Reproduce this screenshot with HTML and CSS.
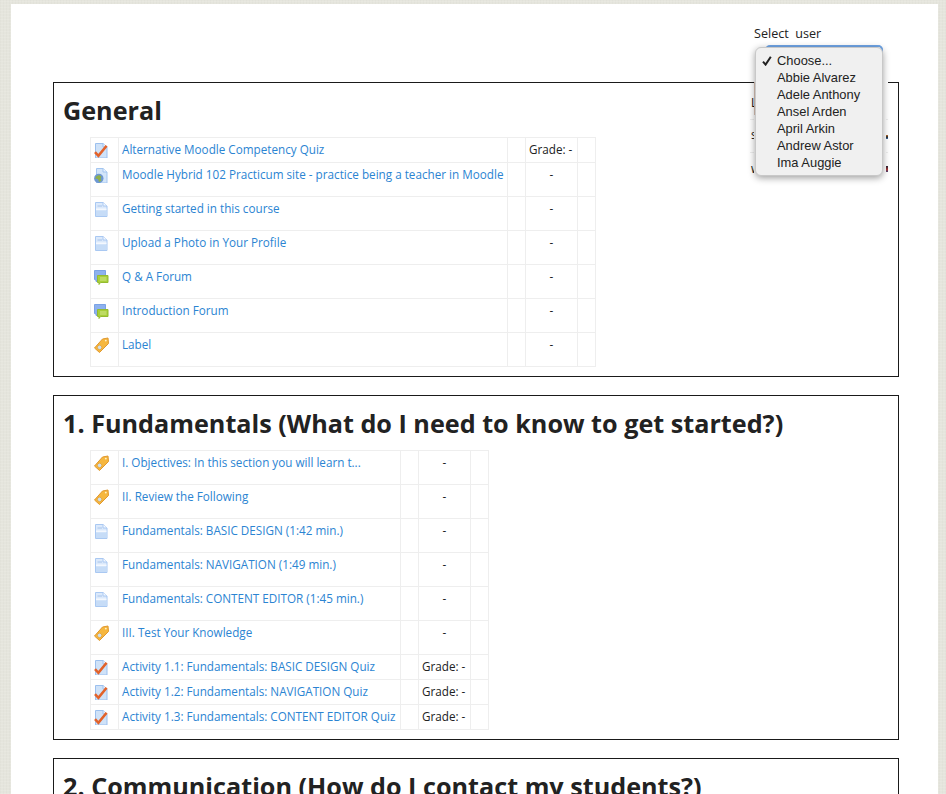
FILE: index.html
```html
<!DOCTYPE html>
<html lang="en">
<head>
<meta charset="utf-8">
<title>Course grades</title>
<link rel="stylesheet" href="styles.css">
</head>
<body>
<svg class="defs" width="0" height="0" aria-hidden="true">
  <symbol id="i-quiz" viewBox="0 0 16 16">
    <path d="M1.5 1.5H9L13 5V16H1.5Z" fill="#cfe2f8" stroke="#9cc0ee"/>
    <path d="M9 1.5V5H13" fill="#eaf3fd" stroke="#9cc0ee"/>
    <path d="M1 10.2 4.4 13.8 12.6 3.8" fill="none" stroke="#e2622a" stroke-width="2.6"/>
  </symbol>
  <symbol id="i-url" viewBox="0 0 16 16">
    <path d="M2.5 1.5H9L13 5V16H2.5Z" fill="#d3e5f9" stroke="#a3c5f0"/>
    <path d="M9 1.5V5H13" fill="#eaf3fd" stroke="#a3c5f0"/>
    <circle cx="4.8" cy="11.4" r="4.7" fill="#6d97d2"/>
    <path d="M2 9.5 5 8 7.5 9.5 6.5 11.5 7.5 13.8 5 15 4 12 1.2 11.5Z" fill="#8fb04a"/>
  </symbol>
  <symbol id="i-page" viewBox="0 0 16 16">
    <path d="M1.5 1.5H9L13 5V15.5H1.5Z" fill="#dbe9fb" stroke="#a9c8f2"/>
    <path d="M9 1.5V5H13" fill="#f4f8fe" stroke="#a9c8f2"/>
    <path d="M3.5 5H8" stroke="#a8c4ea"/>
    <path d="M2 7.5H12.5V9H2Z" fill="#f4f8fe"/>
    <path d="M2 9.5H12.5V15H2Z" fill="#c6dcf7"/>
  </symbol>
  <symbol id="i-forum" viewBox="0 0 16 16">
    <path d="M.5 1.5H11.5V10.5H3.5L2.5 13 1.5 10.5H.5Z" fill="#8db1ee" stroke="#7ba2e4"/>
    <path d="M3.5 6.5H14V13.5H6.5L5 15.5V13.5H3.5Z" fill="#a8cf3a" stroke="#94bb30"/>
    <path d="M6 9H12.5M6 11H12.5" stroke="#d4e88e"/>
  </symbol>
  <symbol id="i-label" viewBox="0 0 16 16">
    <path d="M8.5 2 14 1 14.5 6.5 5.5 15.5 .5 11Z" fill="#f6b73e" stroke="#e0982e" stroke-linejoin="round"/>
    <circle cx="5.6" cy="10.4" r="2.3" fill="#cfe0ee" stroke="#eaa93a"/>
    <circle cx="11.8" cy="3.6" r=".9" fill="#fff2cc"/>
  </symbol>
</svg>

<div class="page">
  <header class="top">
    <div class="picker">
      <label class="picker-label">Select&nbsp; user</label>
      <div class="peek-row">
        <span class="peek-letter peek-s">s</span>
      </div>
      <span class="peek-letter peek-l">L</span>
      <span class="peek-letter peek-w">w</span>
      <div class="shim"></div>
      <div class="peek-tan"></div>
      <div class="peek-stub"></div>
      <div class="peek-bit peek-bit-a"></div>
      <div class="peek-bit peek-bit-b"></div>
      <div class="select-ring"></div>
      <div class="menu">
        <div class="menu-item menu-item-on">
          <svg class="tick" viewBox="0 0 10 10" width="10" height="10"><path d="M1 5.6 3.6 8.6 8.8 .8" fill="none" stroke="#222" stroke-width="2"/></svg>
          Choose...
        </div>
        <div class="menu-item">Abbie Alvarez</div>
        <div class="menu-item">Adele Anthony</div>
        <div class="menu-item">Ansel Arden</div>
        <div class="menu-item">April Arkin</div>
        <div class="menu-item">Andrew Astor</div>
        <div class="menu-item">Ima Auggie</div>
      </div>
    </div>
  </header>

  <section class="sec">
    <h2 class="sec-title">General</h2>
    <table class="grid grid-wide">
      <colgroup><col class="c-icon"><col class="c-name"><col class="c-gap"><col class="c-grade"><col class="c-end"></colgroup>
      <tr><td><svg class="ico"><use href="#i-quiz"/></svg></td><td><a href="#">Alternative Moodle Competency Quiz</a></td><td></td><td class="g gr">Grade: -</td><td></td></tr>
      <tr class="tall"><td><svg class="ico"><use href="#i-url"/></svg></td><td><a href="#">Moodle Hybrid 102 Practicum site - practice being a teacher in Moodle</a></td><td></td><td class="g">-</td><td></td></tr>
      <tr class="tall"><td><svg class="ico"><use href="#i-page"/></svg></td><td><a href="#">Getting started in this course</a></td><td></td><td class="g">-</td><td></td></tr>
      <tr class="tall"><td><svg class="ico"><use href="#i-page"/></svg></td><td><a href="#">Upload a Photo in Your Profile</a></td><td></td><td class="g">-</td><td></td></tr>
      <tr class="tall"><td><svg class="ico"><use href="#i-forum"/></svg></td><td><a href="#">Q &amp; A Forum</a></td><td></td><td class="g">-</td><td></td></tr>
      <tr class="tall"><td><svg class="ico"><use href="#i-forum"/></svg></td><td><a href="#">Introduction Forum</a></td><td></td><td class="g">-</td><td></td></tr>
      <tr class="tall"><td><svg class="ico"><use href="#i-label"/></svg></td><td><a href="#">Label</a></td><td></td><td class="g">-</td><td></td></tr>
    </table>
  </section>

  <section class="sec">
    <h2 class="sec-title">1. Fundamentals (What do I need to know to get started?)</h2>
    <table class="grid grid-narrow">
      <colgroup><col class="c-icon"><col class="c-name-n"><col class="c-gap"><col class="c-grade"><col class="c-end"></colgroup>
      <tr class="tall"><td><svg class="ico"><use href="#i-label"/></svg></td><td><a href="#">I. Objectives: In this section you will learn t...</a></td><td></td><td class="g">-</td><td></td></tr>
      <tr class="tall"><td><svg class="ico"><use href="#i-label"/></svg></td><td><a href="#">II. Review the Following</a></td><td></td><td class="g">-</td><td></td></tr>
      <tr class="tall"><td><svg class="ico"><use href="#i-page"/></svg></td><td><a href="#">Fundamentals: BASIC DESIGN (1:42 min.)</a></td><td></td><td class="g">-</td><td></td></tr>
      <tr class="tall"><td><svg class="ico"><use href="#i-page"/></svg></td><td><a href="#">Fundamentals: NAVIGATION (1:49 min.)</a></td><td></td><td class="g">-</td><td></td></tr>
      <tr class="tall"><td><svg class="ico"><use href="#i-page"/></svg></td><td><a href="#">Fundamentals: CONTENT EDITOR (1:45 min.)</a></td><td></td><td class="g">-</td><td></td></tr>
      <tr class="tall"><td><svg class="ico"><use href="#i-label"/></svg></td><td><a href="#">III. Test Your Knowledge</a></td><td></td><td class="g">-</td><td></td></tr>
      <tr><td><svg class="ico"><use href="#i-quiz"/></svg></td><td><a href="#">Activity 1.1: Fundamentals: BASIC DESIGN Quiz</a></td><td></td><td class="g gr">Grade: -</td><td></td></tr>
      <tr><td><svg class="ico"><use href="#i-quiz"/></svg></td><td><a href="#">Activity 1.2: Fundamentals: NAVIGATION Quiz</a></td><td></td><td class="g gr">Grade: -</td><td></td></tr>
      <tr><td><svg class="ico"><use href="#i-quiz"/></svg></td><td><a href="#">Activity 1.3: Fundamentals: CONTENT EDITOR Quiz</a></td><td></td><td class="g gr">Grade: -</td><td></td></tr>
    </table>
  </section>

  <section class="sec">
    <h2 class="sec-title">2. Communication (How do I contact my students?)</h2>
  </section>
</div>
</body>
</html>
```

FILE: styles.css
```css
html, body {
  margin: 0;
  height: 794px;
  overflow: hidden;
}
body {
  background-color: #e5e5dd;
  background-image:
    repeating-linear-gradient(0deg, rgba(255,255,255,.1) 0 1px, transparent 1px 3px),
    repeating-linear-gradient(90deg, rgba(120,120,100,.03) 0 1px, transparent 1px 3px);
  font-family: "Open Sans", sans-serif;
  font-size: 11.7px;
  color: #222;
}
.defs { position: absolute; }
.page {
  margin: 4px 8px 0 11px;
  padding: 0 39px 0 42px;
  background: #fff;
  height: 790px;
  overflow: hidden;
}
.top {
  height: 78px;
  display: flex;
  justify-content: flex-end;
  padding-top: 21px;
  box-sizing: border-box;
}
.picker {
  position: relative;
  z-index: 2;
  width: 145px;
  height: 20px;
}
.picker-label {
  display: block;
  font-size: 12.6px;
  line-height: 17px;
  color: #222;
}
.shim {
  position: absolute;
  left: 0;
  top: 22px;
  width: 134px;
  height: 158px;
  background: #fff;
}
.peek-row {
  position: absolute;
  left: -4px;
  top: 94px;
  width: 10px;
  height: 32px;
  border-top: 1px solid #eee;
  border-bottom: 1px solid #eee;
}
.peek-letter {
  position: absolute;
  line-height: 16px;
  color: #111;
}
.peek-s { left: 1px; top: 6px; }
.peek-l { left: -3px; top: 69px; }
.peek-w { left: -3px; top: 135px; }
.peek-tan {
  position: absolute;
  left: 0;
  top: 57px;
  width: 2px;
  height: 33px;
  background: #dcc6b8;
}
.peek-stub {
  position: absolute;
  left: 132px;
  top: 94px;
  width: 2px;
  height: 32px;
  border-top: 1px solid #eee;
  border-bottom: 1px solid #eee;
}
.peek-bit {
  position: absolute;
  left: 132px;
  width: 2px;
  background: linear-gradient(#c9772e, #222 50%, #3a6fb0);
}
.peek-bit-a { top: 110px; height: 4px; }
.peek-bit-b { top: 141px; height: 6px; background: linear-gradient(#223, #a33 60%, #447); }
.select-ring {
  position: absolute;
  left: 11px;
  top: 20px;
  width: 118px;
  height: 26px;
  border-radius: 5px;
  background: #fff;
  box-shadow: inset 0 2px 0 #6fa5e6, inset -2px 0 0 #8cb8ec;
}
.menu {
  position: absolute;
  left: 1px;
  top: 22px;
  width: 128px;
  height: 129px;
  box-sizing: border-box;
  padding-top: 4px;
  background: #f0f0f0;
  border: 1px solid #c8c8c8;
  border-radius: 6px;
  box-shadow: 0 2px 7px rgba(0,0,0,.38);
  font-family: "Liberation Sans", Arial, sans-serif;
  font-size: 12.9px;
  color: #222;
}
.menu-item {
  position: relative;
  line-height: 17px;
  padding-left: 21px;
}
.tick {
  position: absolute;
  left: 6px;
  top: 4px;
}
.sec {
  border: 1px solid #1a1a1a;
  padding: 9px 9px 9px;
  margin-bottom: 18px;
}
.sec-title {
  margin: 0 0 9px;
  font-size: 25.2px;
  line-height: 36px;
  font-weight: 700;
  color: #222;
}
.grid {
  margin-left: 27px;
  border-collapse: collapse;
  table-layout: fixed;
}
.grid-wide { width: 505px; }
.grid-narrow { width: 398px; }
.c-icon { width: 28px; }
.c-name { width: 389px; }
.c-name-n { width: 282px; }
.c-gap { width: 18px; }
.c-grade { width: 52px; }
.c-end { width: 18px; }
.grid td {
  border: 1px solid #eee;
  padding: 3px 3px 5px;
  line-height: 16px;
  vertical-align: top;
  white-space: nowrap;
  overflow: hidden;
}
.grid .tall td { padding-bottom: 14px; }
.grid td.g { text-align: center; color: #222; }
.grid td.gr { padding-right: 5px; }
.grid a {
  color: #2b84d2;
  text-decoration: none;
}
.ico {
  display: block;
  width: 16px;
  height: 16px;
  margin-top: 1px;
  margin-bottom: -1px;
}
```
